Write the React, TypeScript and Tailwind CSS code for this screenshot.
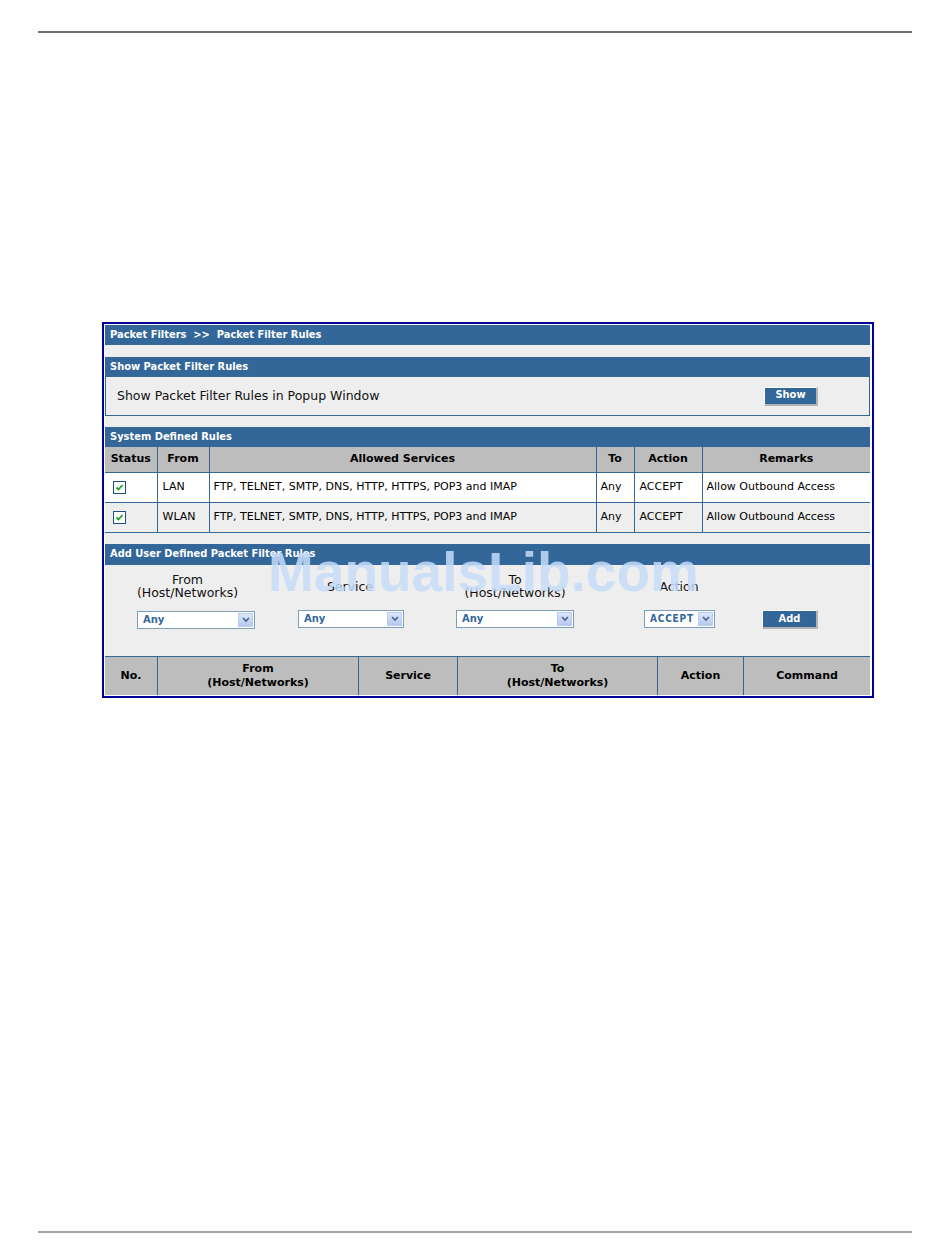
import { ReactNode } from "react";

const condensed = { fontFamily: '"DejaVu Sans Condensed", "DejaVu Sans", Verdana, sans-serif' };
const regular = { fontFamily: '"DejaVu Sans", Verdana, sans-serif' };

interface SystemRule {
    from: string;
    services: string;
    to: string;
    action: string;
    remarks: string;
}

const systemRules: SystemRule[] = [
    { from: 'LAN', services: 'FTP, TELNET, SMTP, DNS, HTTP, HTTPS, POP3 and IMAP', to: 'Any', action: 'ACCEPT', remarks: 'Allow Outbound Access' },
    { from: 'WLAN', services: 'FTP, TELNET, SMTP, DNS, HTTP, HTTPS, POP3 and IMAP', to: 'Any', action: 'ACCEPT', remarks: 'Allow Outbound Access' },
];

function SectionBar({ children, tall }: { children: ReactNode; tall?: boolean }) {
    return (
        <div style={condensed} className={`bg-[#336699] text-white font-bold text-[11px] pl-[5px] flex items-center ${tall ? 'h-[21px]' : 'h-[20px]'}`}>
            {children}
        </div>
    );
}

function Button({ label, w }: { label: string; w: string }) {
    return (
        <div style={condensed} className={`${w} h-[19px] bg-[#336699] border-t border-l border-white border-r-2 border-b-2 border-r-[#b4b4b4] border-b-[#b4b4b4] text-white font-bold text-[11px] flex items-center justify-center`}>
            {label}
        </div>
    );
}

function Checkbox() {
    return (
        <div className="w-[13px] h-[13px] border border-[#1c5180] bg-white flex items-center justify-center">
            <svg width="9" height="9" viewBox="0 0 9 9">
                <path d="M1.5 4.5 L3.5 6.5 L7.5 2" stroke="#21a121" strokeWidth="1.8" fill="none" />
            </svg>
        </div>
    );
}

function Select({ value, w, spaced }: { value: string; w: string; spaced?: boolean }) {
    return (
        <div className={`${w} h-[18px] bg-white border border-[#7f9db9] flex items-center justify-between pl-[5px] pr-px`}>
            <span style={spaced ? condensed : undefined} className={`text-[10px] font-bold text-[#336699] ${spaced ? 'tracking-[0.8px]' : ''}`}>{value}</span>
            <div className="w-[15px] h-[14px] bg-gradient-to-b from-[#dbe6fb] to-[#b5c9f0] border border-[#b9cbef] flex items-center justify-center">
                <svg width="8" height="6" viewBox="0 0 8 6">
                    <path d="M1 1 L4 4 L7 1" stroke="#4d6185" strokeWidth="1.6" fill="none" />
                </svg>
            </div>
        </div>
    );
}

export default function App() {
    return (
        <div className="w-[950px] h-[1260px] bg-white relative" style={regular}>
            <div className="pt-[31px] px-[38px]">
                <div className="h-[2px] bg-[#6e6e6e]" />
            </div>

            <div className="mt-[289px] ml-[102px] w-[772px] border-2 border-[#000099] p-px pr-[2px] bg-white">
                <SectionBar>Packet Filters &nbsp;&gt;&gt;&nbsp; Packet Filter Rules</SectionBar>
                <div className="h-[12px] bg-[#eeeeee]" />

                <SectionBar>Show Packet Filter Rules</SectionBar>
                <div className="h-[39px] bg-[#eeeeee] border border-[#336699] border-t-0 flex items-center justify-between pl-[11px] pr-[51px]">
                    <span className="text-[12.5px] text-[#111]">Show Packet Filter Rules in Popup Window</span>
                    <Button label="Show" w="w-[54px]" />
                </div>
                <div className="h-[11px] bg-[#eeeeee]" />

                <SectionBar>System Defined Rules</SectionBar>
                <table className="w-full border-collapse text-[11px] text-black">
                    <thead>
                        <tr className="h-[25px] bg-[#bdbdbd] font-bold">
                            <td className="w-[52px] text-center border border-[#336699] border-l-0 border-t-0">Status</td>
                            <td className="w-[52px] text-center border border-[#336699] border-t-0">From</td>
                            <td className="w-[387px] text-center border border-[#336699] border-t-0">Allowed Services</td>
                            <td className="w-[38px] text-center border border-[#336699] border-t-0">To</td>
                            <td className="w-[68px] text-center border border-[#336699] border-t-0">Action</td>
                            <td className="text-center border border-[#336699] border-t-0 border-r-0">Remarks</td>
                        </tr>
                    </thead>
                    <tbody>
                        {systemRules.map((rule, i) => (
                            <tr key={rule.from} className={`h-[30px] ${i % 2 ? 'bg-[#eeeeee]' : 'bg-white'}`}>
                                <td className="border border-[#336699] border-l-0 pl-[8px]"><Checkbox /></td>
                                <td className="border border-[#336699] pl-[5px]">{rule.from}</td>
                                <td className="border border-[#336699] pl-[4px]">{rule.services}</td>
                                <td className="border border-[#336699] pl-[4px]">{rule.to}</td>
                                <td className="border border-[#336699] pl-[5px]">{rule.action}</td>
                                <td className="border border-[#336699] border-r-0 pl-[4px]">{rule.remarks}</td>
                            </tr>
                        ))}
                    </tbody>
                </table>
                <div className="h-[11px] bg-[#eeeeee]" />

                <SectionBar tall>Add User Defined Packet Filter Rules</SectionBar>
                <div className="h-[91px] bg-[#eeeeee] grid grid-cols-[165px_160px_170px_158px_1fr] grid-rows-[37px_18px] text-[12.5px] text-[#111] pt-[8px] leading-[13px]">
                    <div className="flex flex-col items-center justify-start">
                        <span>From</span>
                        <span>(Host/Networks)</span>
                    </div>
                    <div className="flex items-start justify-center pt-[7px]">Service</div>
                    <div className="flex flex-col items-center">
                        <span>To</span>
                        <span>(Host/Networks)</span>
                    </div>
                    <div className="flex items-start justify-center pt-[7px]">Action</div>
                    <div />
                    <div className="pl-[32px] pt-px"><Select value="Any" w="w-[118px]" /></div>
                    <div className="pl-[28px]"><Select value="Any" w="w-[106px]" /></div>
                    <div className="pl-[26px]"><Select value="Any" w="w-[118px]" /></div>
                    <div className="pl-[44px]"><Select value="ACCEPT" w="w-[71px]" spaced /></div>
                    <div className="pl-[4px]"><Button label="Add" w="w-[56px]" /></div>
                </div>

                <div className="h-[39px] bg-[#bdbdbd] border-t border-[#336699] flex text-[11px] font-bold text-black leading-[14px]">
                    <div className="w-[53px] flex items-center justify-center border-r border-[#336699]">No.</div>
                    <div className="w-[201px] flex flex-col items-center justify-center border-r border-[#336699]">
                        <span>From</span>
                        <span>(Host/Networks)</span>
                    </div>
                    <div className="w-[99px] flex items-center justify-center border-r border-[#336699]">Service</div>
                    <div className="w-[200px] flex flex-col items-center justify-center border-r border-[#336699]">
                        <span>To</span>
                        <span>(Host/Networks)</span>
                    </div>
                    <div className="w-[86px] flex items-center justify-center border-r border-[#336699]">Action</div>
                    <div className="flex-1 flex items-center justify-center">Command</div>
                </div>
            </div>

            <div
                className="absolute left-[268px] top-[545px] text-[55px] font-bold text-[#c6dcf8]/85 leading-none pointer-events-none"
                style={{ fontFamily: '"Liberation Sans", Arial, sans-serif' }}
            >
                ManualsLib.com
            </div>

            <div className="absolute left-[38px] right-[38px] top-[1231px] h-[2px] bg-[#a6a6a6]" />
        </div>
    );
}
